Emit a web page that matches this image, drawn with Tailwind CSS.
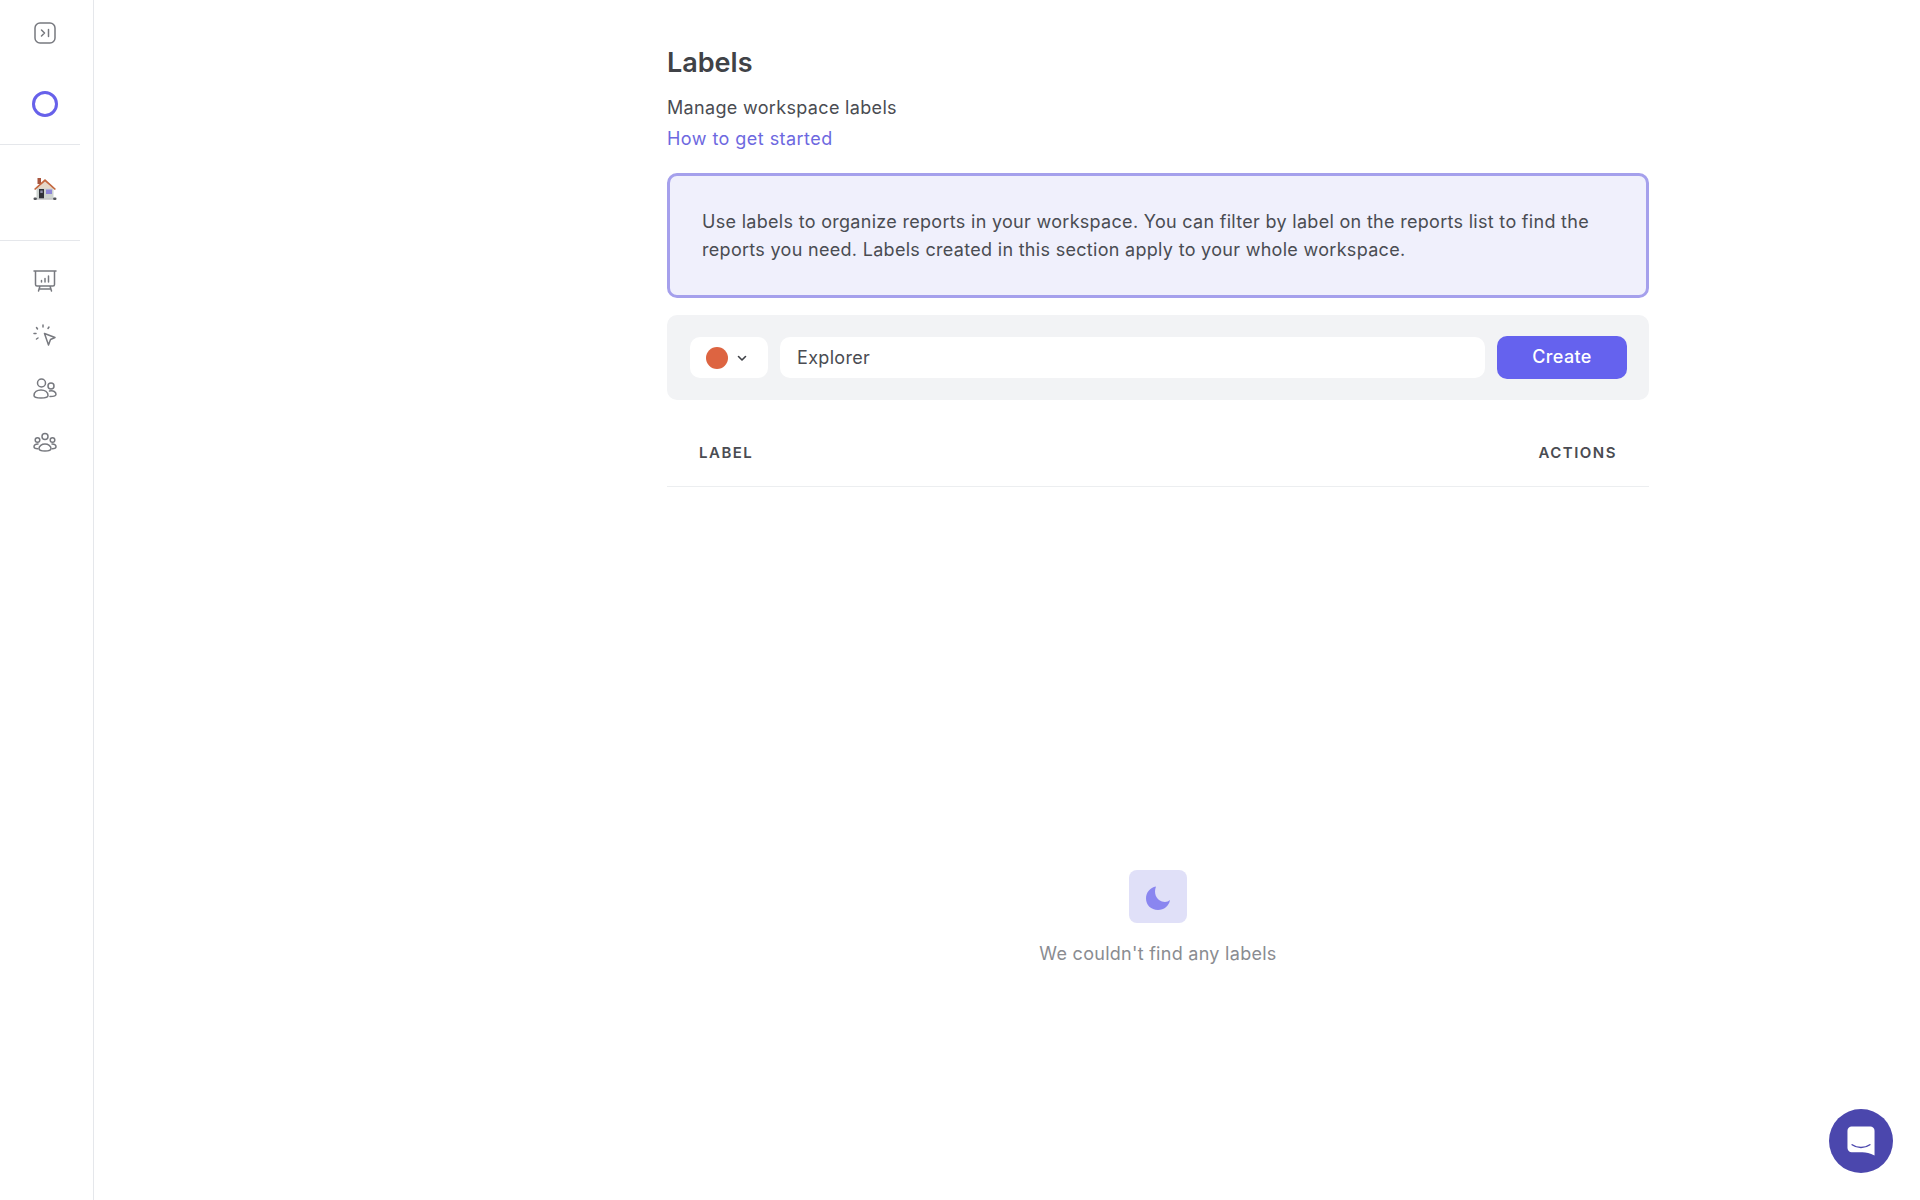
<!DOCTYPE html>
<html lang="en">
<head>
    <meta charset="UTF-8">
    <meta name="viewport" content="width=device-width, initial-scale=1.0">
    <title>Labels</title>
    <script src="https://cdn.jsdelivr.net/npm/@tailwindcss/browser@4"></script>
</head>
<body class="bg-white font-['Inter',sans-serif] text-[#4a4c52]">
    <div class="flex h-[1200px] overflow-hidden">
        <!-- sidebar -->
        <aside class="w-[94px] shrink-0 border-r border-[#e5e7eb] flex flex-col">
            <div class="pl-[32px] pt-[21px] h-[145px] w-[80px] border-b border-[#e5e7eb]">
                <svg width="24" height="24" viewBox="0 0 24 24" fill="none" stroke="#77797f" stroke-width="1.500" stroke-linecap="round" stroke-linejoin="round" class="ml-[1px]">
                    <rect x="2" y="2" width="20" height="20" rx="5"/>
                    <path d="M8.500 9l3 3-3 3M15.500 8.500v7"/>
                </svg>
                <div class="w-[26px] h-[26px] rounded-full border-[3px] border-[#6761ea] mt-[46px]"></div>
            </div>
            <div class="h-[96px] w-[80px] border-b border-[#e5e7eb] flex items-center pl-[33px]">
                <svg width="24" height="24" viewBox="0 0 24 24" class="-mt-[7px]">
                    <rect x="4.500" y="1" width="3.500" height="6" fill="#a8563f"/>
                    <path d="M3.500 10h17v11.500h-17z" fill="#cdd3d0"/>
                    <path d="M12 4.500L4 11.500h16z" fill="#e6d8c8"/>
                    <path d="M1 12L12 2l11 10-1.200 1L12 4.500 2.200 13z" fill="#c4683f"/>
                    <rect x="6" y="12" width="5" height="9.500" fill="#2f3138"/>
                    <rect x="7.300" y="13.500" width="2.400" height="2.500" fill="#8d8fa8"/>
                    <rect x="13" y="12.500" width="6" height="4.500" fill="#8d86d8"/>
                    <rect x="0.500" y="20.500" width="3.500" height="2.500" rx="1.200" fill="#55575c"/>
                    <rect x="20" y="20.500" width="3.500" height="2.500" rx="1.200" fill="#55575c"/>
                    <rect x="4" y="21.500" width="16" height="1" fill="#a5a7aa"/>
                </svg>
            </div>
            <nav class="flex flex-col pl-[33px] pt-[28px] gap-[30px]">
                <svg width="24" height="24" viewBox="0 0 24 24" fill="none" stroke="#77797f" stroke-width="1.500" stroke-linecap="round" stroke-linejoin="round">
                    <path d="M1 2h22M2.500 2v13.500a1.500 1.500 0 0 0 1.500 1.500h16a1.500 1.500 0 0 0 1.500-1.500V2M7 17l-1.500 5M17 17l1.500 5M6 20h12M8.500 13v-1.500M12 13V9.500M15.500 13V7"/>
                </svg>
                <svg width="24" height="24" viewBox="0 0 24 24" fill="none" stroke="#77797f" stroke-width="1.500" stroke-linecap="round" stroke-linejoin="round">
                    <path d="M11.500 10.500l10.500 4-4.500 2-2 5.500z"/>
                    <path d="M10 2v2M3.500 4.500l1 1.500M16 4l-1 1.500M1 10.500h2M3.500 16l1.500-1"/>
                </svg>
                <svg width="24" height="24" viewBox="0 0 24 24" fill="none" stroke="#77797f" stroke-width="1.500" stroke-linecap="round" stroke-linejoin="round">
                    <circle cx="8.500" cy="6" r="4"/>
                    <circle cx="18" cy="9" r="3"/>
                    <path d="M1 18.500c0-3.500 3.300-5.500 7-5.500s7 2 7 5.500c0 2-3.300 2.500-7 2.500s-7-.5-7-2.500z"/>
                    <path d="M16.500 14c4-.8 6.500 1 6.500 3.200 0 1.500-2 2.300-6 2.300"/>
                </svg>
                <svg width="24" height="24" viewBox="0 0 24 24" fill="none" stroke="#77797f" stroke-width="1.500" stroke-linecap="round" stroke-linejoin="round">
                    <circle cx="12" cy="5.500" r="3"/>
                    <circle cx="4.500" cy="9" r="2.300"/>
                    <circle cx="19.500" cy="9" r="2.300"/>
                    <path d="M6 17.500c0-2.500 2.700-4.500 6-4.500s6 2 6 4.500c0 1.500-2.700 2.500-6 2.500s-6-1-6-2.500z"/>
                    <path d="M5 13c-2.500 0-4 1.300-4 2.800 0 1.200 1.500 2 3.800 2M19 13c2.500 0 4 1.300 4 2.800 0 1.200-1.500 2-3.800 2"/>
                </svg>
            </nav>
        </aside>

        <!-- content -->
        <main class="ml-[573px] w-[982px] shrink-0 flex flex-col">
            <h1 class="text-[27px] leading-[32px] font-semibold mt-[47px] text-[#404247]">Labels</h1>
            <p class="text-[18px] leading-[31px] mt-[13px] tracking-[0.33px]">Manage workspace labels</p>
            <a class="text-[18px] leading-[31px] tracking-[0.45px] text-[#6d68e0]">How to get started</a>
            <div class="mt-[19px] h-[125px] border-[3px] border-[#a5a0ec] bg-[#f0f0fc] rounded-[10px] px-[32px] flex items-center">
                <p class="text-[18px] leading-[28px] tracking-[0.3px]">Use labels to organize reports in your workspace. You can filter by label on the reports list to find the reports you need. Labels created in this section apply to your whole workspace.</p>
            </div>
            <div class="mt-[17px] h-[85px] bg-[#f2f3f5] rounded-[10px] pl-[23px] pr-[22px] flex items-center gap-[12px]">
                <button class="w-[78px] h-[41px] bg-white rounded-[10px] flex items-center pl-[16px] gap-[8px]">
                    <span class="w-[22px] h-[22px] rounded-full bg-[#dd6441]"></span>
                    <svg width="12" height="12" viewBox="0 0 12 12" fill="none" stroke="#3f4147" stroke-width="1.600" stroke-linecap="round" stroke-linejoin="round"><path d="M2.500 4.500L6 8l3.500-3.500"/></svg>
                </button>
                <input class="flex-1 h-[41px] bg-white rounded-[10px] pl-[17px] pr-[16px] text-[18px] tracking-[0.33px] text-[#4a4c52] outline-none" value="Explorer">
                <button class="w-[130px] h-[43px] pb-[2px] bg-[#6562ee] rounded-[10px] text-white text-[18px] font-medium tracking-[0.33px]">Create</button>
            </div>
            <div class="mt-[17px] h-[70px] pt-[3px] border-b border-[#eceef0] flex items-center justify-between px-[32px] text-[15px] font-semibold tracking-[1.500px] text-[#4a4c52]">
                <span>LABEL</span>
                <span>ACTIONS</span>
            </div>
            <div class="mt-[383px] flex flex-col items-center">
                <div class="w-[58px] h-[53px] rounded-[8px] bg-[#e0e0f8] flex items-center justify-center">
                    <svg width="26" height="26" viewBox="0 0 26 26" class="mt-[2px]"><path d="M11 1.500C5 2.500 1 7.500 1 13.500 1 20 6 25 13 25c6 0 11-4 12-10-2 2-5 2.500-8 1.500C11 14.500 8.500 8 11 1.500z" fill="#8a86f0"/></svg>
                </div>
                <p class="text-[18px] leading-[28px] mt-[17px] tracking-[0.28px] text-[#8a8c91]">We couldn't find any labels</p>
            </div>
        </main>
    </div>

    <!-- chat launcher -->
    <button class="fixed left-[1829px] top-[1109px] w-[64px] h-[64px] rounded-full bg-[#4b47ad] flex items-center justify-center">
        <svg width="28" height="31" viewBox="0 0 30 32">
            <path d="M5 0h20a4.500 4.500 0 0 1 4.500 4.500V31c-5-2.500-9-3.500-13-3.500H5A4.500 4.500 0 0 1 .5 23V4.500A4.500 4.500 0 0 1 5 0z" fill="#fff"/>
            <path d="M5.500 19.500c5.500 4 13.500 4 19 0" fill="none" stroke="#4b47ad" stroke-width="1.600" stroke-linecap="round"/>
        </svg>
    </button>
</body>
</html>
